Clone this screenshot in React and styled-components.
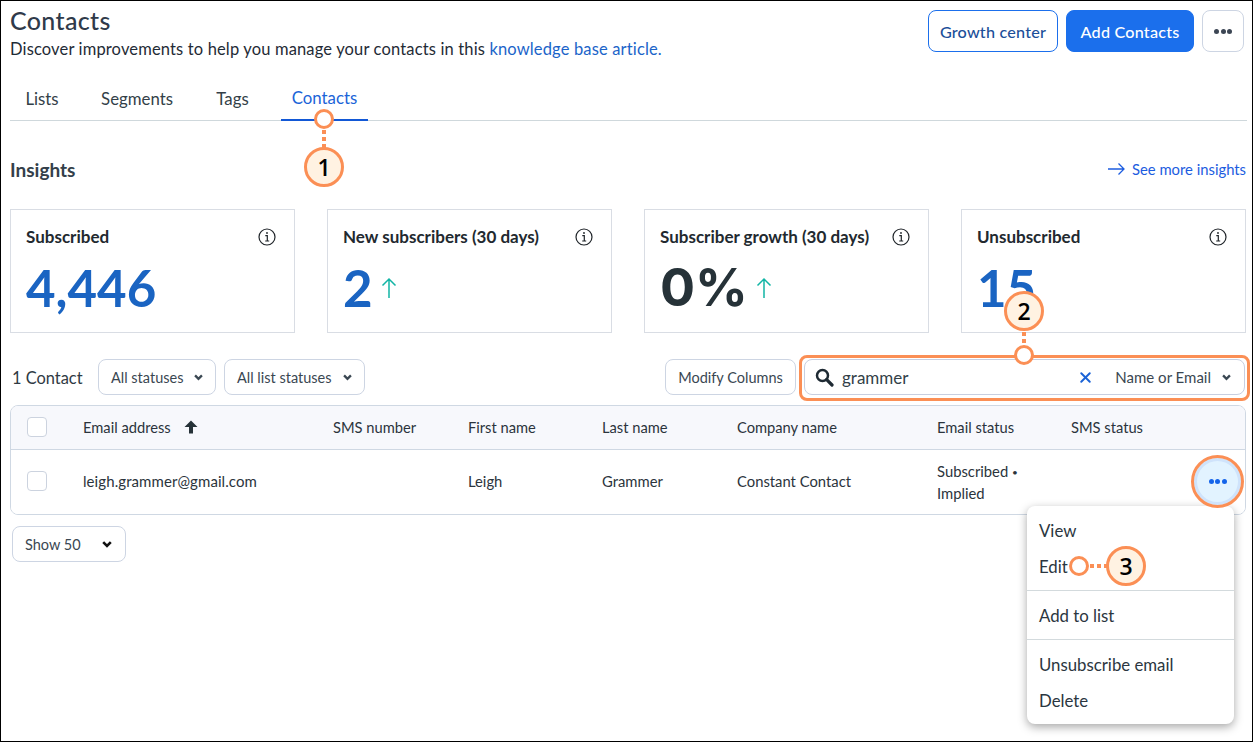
import React from "react";
import styled, { createGlobalStyle } from "styled-components";
import { X } from "lucide-react";

const Global = createGlobalStyle`
  html, body { margin: 0; padding: 0; background: #fff; }
  * { box-sizing: border-box; }
  body { font-family: "Lato", "Open Sans", sans-serif; color: #2a343d; }
`;

const Frame = styled.div`
  position: relative;
  width: 1253px;
  height: 742px;
  border: 1px solid #000;
  padding: 0 6px 0 9px;
  overflow: hidden;
`;
const Header = styled.header`
  display: flex;
  justify-content: space-between;
  align-items: flex-start;
  height: 68px;
  padding-top: 7px;
`;
const Title = styled.h1`
  margin: 0;
  font-size: 25px;
  line-height: 24px;
  font-weight: 500;
  color: #2f3a4a;
  letter-spacing: 0.35px;
`;
const Sub = styled.p`
  margin: 7px 0 0;
  font-size: 16.5px;
  line-height: 20px;
  color: #1f2b36;
  letter-spacing: 0.15px;
`;
const A = styled.a`
  color: #1b64c9;
`;
const Actions = styled.div`
  display: flex;
  gap: 8px;
  padding-top: 2px;
  padding-right: 2px;
`;
const HeadBtn = styled.button`
  height: 42px;
  width: ${(p) => p.$w}px;
  border-radius: 8px;
  font: 500 16.2px "Lato", sans-serif;
  letter-spacing: 0.2px;
  border: 1px solid #1b6fec;
  background: ${(p) => (p.$solid ? "#1b6fec" : "#fff")};
  color: ${(p) => (p.$solid ? "#fff" : "#1c4f99")};
`;
const MoreBtn = styled.button`
  width: 42px;
  height: 42px;
  border: 1px solid #cdd5e3;
  border-radius: 8px;
  background: #fff;
  display: flex;
  align-items: center;
  justify-content: center;
`;
const Dots = styled.span`
  display: flex;
  gap: 1.5px;
  i {
    width: ${(p) => p.$s}px;
    height: ${(p) => p.$s}px;
    border-radius: 50%;
    background: ${(p) => p.$c};
  }
`;
const Tabs = styled.nav`
  display: flex;
  gap: 21px;
  height: 52px;
  padding-left: 5px;
  border-bottom: 1px solid #cfd8dc;
  margin-right: -1px;
`;
const Tab = styled.div`
  height: 52px;
  padding: ${(p) => (p.$active ? "19px" : "20px")} 0 0;
  width: ${(p) => p.$w}px;
  text-align: center;
  font-size: 16.8px;
  line-height: 20px;
  color: ${(p) => (p.$active ? "#1b64d8" : "#333f48")};
  border-bottom: ${(p) => (p.$active ? "2px solid #1258d6" : "none")};
`;
const InsightsRow = styled.div`
  display: flex;
  justify-content: space-between;
  align-items: center;
  height: 88px;
  padding-top: 18px;
  padding-bottom: 10px;
`;
const H2 = styled.h2`
  margin: 0;
  font-size: 19px;
  font-weight: 700;
  color: #333f4a;
`;
const More = styled.a`
  display: flex;
  align-items: center;
  gap: 7px;
  font-size: 14.8px;
  color: #1c5ce0;
`;
const Cards = styled.section`
  display: grid;
  grid-template-columns: repeat(4, 285px);
  column-gap: 32px;
`;
const Card = styled.div`
  height: 124px;
  border: 1px solid #d9dde4;
  padding: 17px 18px 0 15px;
`;
const CardHead = styled.div`
  display: flex;
  justify-content: space-between;
  align-items: center;
  font-size: 17px;
  line-height: 20px;
  font-weight: 700;
  color: #22292f;
`;
const Big = styled.div`
  display: flex;
  align-items: center;
  gap: 8px;
  margin-top: 11px;
  font-family: ${(p) => (p.$dark ? '"Inter", sans-serif' : "inherit")};
  font-size: ${(p) => (p.$dark ? 52 : 51)}px;
  line-height: 60px;
  font-weight: 700;
  color: ${(p) => (p.$dark ? "#263238" : "#1a64c2")};
`;
const Toolbar = styled.div`
  display: flex;
  align-items: center;
  gap: 8px;
  margin-top: 26px;
  height: 36px;
  padding-left: 2px;
`;
const Count = styled.span`
  font-size: 16.4px;
  width: 78px;
  color: #2f3a44;
`;
const Sel = styled.div`
  height: 36px;
  width: ${(p) => p.$w}px;
  border: 1px solid #cdd5e3;
  border-radius: 8px;
  display: flex;
  align-items: center;
  justify-content: space-between;
  padding: 0 ${(p) => p.$pr ?? 12}px 0 12px;
  font-size: 14.5px;
  color: #3a4752;
  background: #fff;
`;
const Spacer = styled.div`
  flex: 1;
`;
const ModBtn = styled(Sel)`
  justify-content: center;
  padding: 0;
`;
const SearchBox = styled.div`
  width: 441px;
  height: 36px;
  margin-right: 1px;
  border: 1px solid #c8cfe0;
  border-radius: 8px;
  display: flex;
  align-items: center;
  padding: 0 13px 0 10px;
  font-size: 17px;
  color: #333f48;
`;
const Query = styled.span`
  margin-left: 8px;
  flex: 1;
`;
const Field = styled.span`
  margin: 0 11px 0 21px;
  font-size: 15px;
  color: #3a4752;
`;
const Table = styled.div`
  margin-top: 10px;
  height: 110px;
  border: 1px solid #cfd8e3;
  border-radius: 8px;
  overflow: hidden;
`;
const Row = styled.div`
  display: grid;
  grid-template-columns: 72px 250px 135px 134px 135px 200px 134px 1fr;
  align-items: center;
  height: ${(p) => p.$h}px;
  padding-bottom: ${(p) => (p.$head ? 2 : 2)}px;
  font-size: ${(p) => (p.$head ? 14.7 : 14.8)}px;
  color: #2b343c;
  background: ${(p) => (p.$head ? "#f7f8fc" : "#fff")};
  border-bottom: ${(p) => (p.$head ? "1px solid #cfd8e3" : "none")};
`;
const Check = styled.div`
  width: 20px;
  height: 20px;
  margin-left: 16px;
  border: 1px solid #ccd3df;
  border-radius: 4px;
  background: #fff;
`;
const Sort = styled.span`
  display: flex;
  align-items: center;
  gap: 13px;
`;
const Email = styled.span`
  font-size: 15px;
  letter-spacing: 0.08px;
`;
const Status = styled.div`
  line-height: 21px;
  margin-top: 2px;
`;
const Bullet = styled.span`
  font-size: 10px;
  vertical-align: 1px;
`;
const ShowSel = styled(Sel)`
  margin: 11px 0 0 2px;
  padding-right: 12px;
`;
const Menu = styled.div`
  position: absolute;
  left: 1026px;
  top: 505px;
  width: 207px;
  height: 218px;
  background: #fff;
  border-radius: 8px;
  box-shadow: 0 3px 10px rgba(0, 0, 0, 0.35);
  padding-top: 6px;
`;
const MI = styled.div`
  height: 36px;
  padding-left: 12px;
  display: flex;
  align-items: center;
  font-size: 16.8px;
  color: #2b3640;
`;
const Hr = styled.hr`
  margin: 6px 0;
  border: 0;
  border-top: 1px solid #d3dadd;
`;
const Highlight = styled.div`
  position: absolute;
  left: 798px;
  top: 354px;
  width: 451px;
  height: 46px;
  border: 3px solid #fb8f55;
  border-radius: 8px;
`;
const RowBtn = styled.div`
  position: absolute;
  left: 1190px;
  top: 454px;
  width: 53px;
  height: 53px;
  border: 3px solid #fb8f55;
  border-radius: 50%;
  background: #e2f3ff;
  box-shadow: inset 0 0 0 3px #cfe3fb;
  display: flex;
  align-items: center;
  justify-content: center;
`;
const Badge = styled.div`
  position: absolute;
  left: ${(p) => p.$x - 20}px;
  top: ${(p) => p.$y - 20}px;
  width: 40px;
  height: 40px;
  border: 3px solid #fb8f55;
  border-radius: 50%;
  background: #fff2e2;
  display: flex;
  align-items: center;
  justify-content: center;
  font: 600 23px "Open Sans", sans-serif;
  color: #000;
`;
const Ring = styled.div`
  position: absolute;
  left: ${(p) => p.$x - 10}px;
  top: ${(p) => p.$y - 10}px;
  width: 20px;
  height: 20px;
  border: 3px solid #fb8f55;
  border-radius: 50%;
  background: #fff;
`;
const VDots = styled.div`
  position: absolute;
  left: ${(p) => p.$x - 2}px;
  top: ${(p) => p.$y}px;
  width: 4px;
  height: ${(p) => p.$l}px;
  background: repeating-linear-gradient(to bottom, #fb8f55 0 4px, transparent 4px 7px);
`;
const HDots = styled.div`
  position: absolute;
  left: ${(p) => p.$x}px;
  top: ${(p) => p.$y - 2}px;
  height: 4px;
  width: ${(p) => p.$l}px;
  background: repeating-linear-gradient(to right, #fb8f55 0 4px, transparent 4px 7px);
`;

const Info = () => (
  <svg width="18" height="18" viewBox="0 0 18 18" fill="none" stroke="#1f2429" strokeWidth="1.2">
    <circle cx="9" cy="9" r="8" />
    <path d="M7.3 7.7H9.3V13M7.2 13H11.2" />
    <circle cx="9" cy="5" r="0.9" fill="#1f2429" stroke="none" />
  </svg>
);
const Trend = () => (
  <svg width="16" height="22" viewBox="0 0 16 22" fill="none" stroke="#12b5a5" strokeWidth="1.5">
    <path d="M8 21V2M1.5 8.5L8 2l6.5 6.5" />
  </svg>
);
const LongArrow = () => (
  <svg width="17" height="14" viewBox="0 0 17 14" fill="none" stroke="#1c5ce0" strokeWidth="1.3">
    <path d="M0 7H16M10.5 1.5L16 7l-5.5 5.5" />
  </svg>
);
const Tri = ({ c = "#3a4752", w = 9 }) => (
  <svg width={w} height="7" viewBox="0 0 10 7" fill="none" stroke={c} strokeWidth="2.6">
    <path d="M1.2 1.2L5 5l3.8-3.8" />
  </svg>
);
const Magnifier = () => (
  <svg width="19" height="19" viewBox="0 0 19 19" fill="none" stroke="#1e2a33">
    <circle cx="7.5" cy="7.5" r="5.5" strokeWidth="2.5" />
    <path d="M11.7 11.7L17 17" strokeWidth="3.2" strokeLinecap="round" />
  </svg>
);
const SortUp = () => (
  <svg width="14" height="14" viewBox="0 0 14 14" fill="#263238">
    <path d="M7 0.5L13.5 7H9V13.5H5V7H0.5Z" />
  </svg>
);
const ThreeDots = ({ c, s }) => (
  <Dots $c={c} $s={s}>
    <i />
    <i />
    <i />
  </Dots>
);

const cards = [
  { label: "Subscribed", value: "4,446" },
  { label: "New subscribers (30 days)", value: "2", trend: true },
  { label: "Subscriber growth (30 days)", value: "0%", trend: true, dark: true },
  { label: "Unsubscribed", value: "15" },
];

export default function App() {
  return (
    <Frame>
      <Global />
      <Header>
        <div>
          <Title>Contacts</Title>
          <Sub>
            Discover improvements to help you manage your contacts in this <A>knowledge base article.</A>
          </Sub>
        </div>
        <Actions>
          <HeadBtn $w={130}>Growth center</HeadBtn>
          <HeadBtn $w={128} $solid>Add Contacts</HeadBtn>
          <MoreBtn>
            <ThreeDots c="#3c4654" s={5} />
          </MoreBtn>
        </Actions>
      </Header>
      <Tabs>
        <Tab $w={54}>Lists</Tab>
        <Tab $w={94}>Segments</Tab>
        <Tab $w={55}>Tags</Tab>
        <Tab $w={87} $active>Contacts</Tab>
      </Tabs>
      <InsightsRow>
        <H2>Insights</H2>
        <More>
          <LongArrow />
          See more insights
        </More>
      </InsightsRow>
      <Cards>
        {cards.map((c) => (
          <Card key={c.label}>
            <CardHead>
              {c.label}
              <Info />
            </CardHead>
            <Big $dark={c.dark}>
              {c.value}
              {c.trend && <Trend />}
            </Big>
          </Card>
        ))}
      </Cards>
      <Toolbar>
        <Count>1 Contact</Count>
        <Sel $w={118}>All statuses <Tri /></Sel>
        <Sel $w={141}>All list statuses <Tri /></Sel>
        <Spacer />
        <ModBtn $w={131}>Modify Columns</ModBtn>
        <SearchBox>
          <Magnifier />
          <Query>grammer</Query>
          <X size={17} strokeWidth={2.8} color="#1a62d6" />
          <Field>Name or Email</Field>
          <Tri />
        </SearchBox>
      </Toolbar>
      <Table>
        <Row $h={44} $head>
          <Check />
          <Sort>Email address <SortUp /></Sort>
          <span>SMS number</span>
          <span>First name</span>
          <span>Last name</span>
          <span>Company name</span>
          <span>Email status</span>
          <span>SMS status</span>
        </Row>
        <Row $h={64}>
          <Check />
          <Email>leigh.grammer@gmail.com</Email>
          <span />
          <span>Leigh</span>
          <span>Grammer</span>
          <span>Constant Contact</span>
          <Status>Subscribed <Bullet>•</Bullet><br />Implied</Status>
          <span />
        </Row>
      </Table>
      <ShowSel $w={114}>Show 50 <Tri c="#111" w={12} /></ShowSel>

      <Menu>
        <MI>View</MI>
        <MI>Edit</MI>
        <Hr />
        <MI>Add to list</MI>
        <Hr />
        <MI>Unsubscribe email</MI>
        <MI>Delete</MI>
      </Menu>
      <RowBtn><ThreeDots c="#1464ea" s={5} /></RowBtn>
      <Highlight />
      <VDots $x={323} $y={129} $l={18} />
      <Ring $x={323} $y={118} />
      <Badge $x={323} $y={166}>1</Badge>
      <VDots $x={1023} $y={331} $l={15} />
      <Ring $x={1023} $y={354} />
      <Badge $x={1023} $y={310}>2</Badge>
      <HDots $x={1089} $y={565} $l={18} />
      <Ring $x={1078} $y={565} />
      <Badge $x={1125} $y={565}>3</Badge>
    </Frame>
  );
}
